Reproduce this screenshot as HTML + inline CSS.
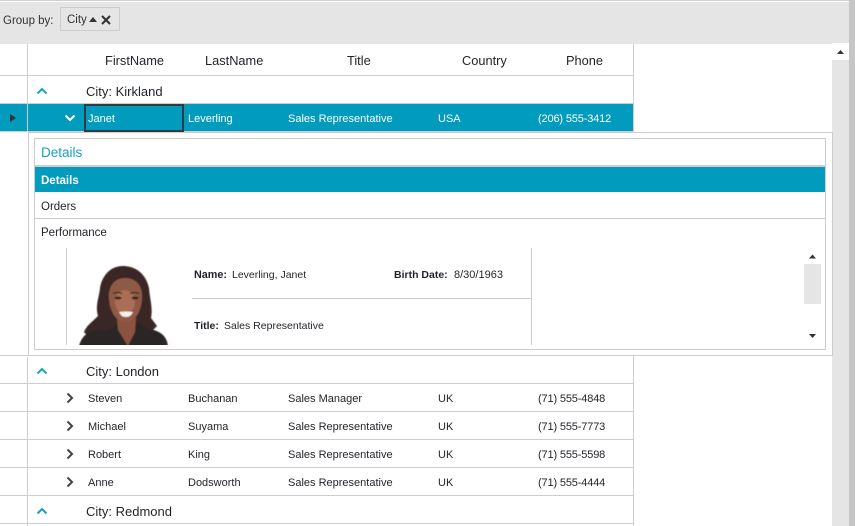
<!DOCTYPE html>
<html><head><meta charset="utf-8">
<style>
html,body{margin:0;padding:0;background:#fff}
body{width:855px;height:526px;overflow:hidden;position:relative;font-family:"Liberation Sans",sans-serif;color:#1f2328}
.a{position:absolute}
.l{position:absolute;background:#cdcdcd}
.t{position:absolute;white-space:nowrap;font-size:11px;line-height:14px}
.p{letter-spacing:-.15px}
.h{position:absolute;white-space:nowrap;font-size:12.800px;line-height:16px}
.g{position:absolute;white-space:nowrap;font-size:13px;line-height:16px}
.w{color:#fff}
svg{position:absolute;overflow:visible}
</style></head><body>
<div class="a" style="left:0;top:2px;width:855px;height:42px;background:#e5e5e5"></div>
<div class="a" style="left:0;top:0;width:855px;height:1px;background:#cfcfcf"></div>
<div class="h" style="left:3px;top:13px;font-size:11.500px;color:#333">Group by:</div>
<div class="a" style="left:60px;top:7px;width:58px;height:22px;border:1px solid #cdcdcd;background:#e5e5e5"></div>
<div class="h" style="left:67px;top:12px;font-size:11.500px;color:#333">City</div>
<svg style="left:0;top:0" width="855" height="526">
<path d="M89 22L93 17L97 22Z" fill="#333"/>
<path d="M102 16L110 24M110 16L102 24" stroke="#333" stroke-width="2" fill="none"/>
</svg>

<!-- outer scrollbar -->
<div class="a" style="left:832px;top:44px;width:17px;height:482px;background:#e5e5e5"></div>
<div class="a" style="left:849px;top:0;width:6px;height:526px;background:#c6c6c6"></div>
<div class="a" style="left:832px;top:43px;width:17px;height:17px;background:#fff"></div>
<svg style="left:0;top:0" width="855" height="526"><path d="M837 54L840.500 50L844 54Z" fill="#333"/></svg>

<!-- grid lines -->
<div class="l" style="left:27px;top:44px;width:1px;height:88px"></div>
<div class="l" style="left:27px;top:357px;width:1px;height:169px"></div>
<div class="l" style="left:633px;top:44px;width:1px;height:88px"></div>
<div class="l" style="left:633px;top:355px;width:1px;height:171px"></div>
<div class="l" style="left:0;top:75px;width:633px;height:1px"></div>
<div class="l" style="left:0;top:103px;width:633px;height:1px"></div>
<div class="l" style="left:0;top:131px;width:633px;height:1px"></div>
<div class="l" style="left:0;top:355px;width:832px;height:1px"></div>
<div class="l" style="left:0;top:383px;width:633px;height:1px"></div>
<div class="l" style="left:0;top:411px;width:633px;height:1px"></div>
<div class="l" style="left:0;top:439px;width:633px;height:1px"></div>
<div class="l" style="left:0;top:467px;width:633px;height:1px"></div>
<div class="l" style="left:0;top:495px;width:633px;height:1px"></div>
<div class="l" style="left:0;top:523px;width:633px;height:1px"></div>

<!-- header -->
<div class="h" style="left:105px;top:53px">FirstName</div>
<div class="h" style="left:205px;top:53px">LastName</div>
<div class="h" style="left:347px;top:53px">Title</div>
<div class="h" style="left:462px;top:53px">Country</div>
<div class="h" style="left:566px;top:53px">Phone</div>

<!-- Kirkland -->
<div class="g" style="left:86px;top:84px">City: Kirkland</div>

<!-- selected -->
<div class="a" style="left:0;top:104px;width:27px;height:27px;background:#009bbd"></div>
<div class="a" style="left:28px;top:104px;width:605px;height:27px;background:#009bbd"></div>
<div class="a" style="left:84px;top:104px;width:96px;height:24px;border:2px solid #2f3a42"></div>
<div class="t w" style="left:88px;top:112px">Janet</div>
<div class="t w" style="left:188px;top:112px">Leverling</div>
<div class="t w" style="left:288px;top:112px">Sales Representative</div>
<div class="t w" style="left:438px;top:112px">USA</div>
<div class="t w p" style="left:538px;top:112px">(206) 555-3412</div>

<!-- detail -->
<div class="a" style="left:28px;top:132px;width:803px;height:222px;border:1px solid #cdcdcd;background:#fff"></div>
<div class="a" style="left:34px;top:138px;width:790px;height:210px;border:1px solid #cdcdcd;background:#fff"></div>
<div class="l" style="left:35px;top:165px;width:790px;height:2px"></div>
<div class="h" style="left:41px;top:145px;font-size:13.500px;color:#1a9fc0">Details</div>
<div class="a" style="left:35px;top:167px;width:790px;height:25px;background:#009bbd"></div>
<div class="t w" style="left:41px;top:174px;font-weight:bold;font-size:11.500px">Details</div>
<div class="l" style="left:35px;top:218px;width:790px;height:1px"></div>
<div class="t" style="left:41px;top:200px;font-size:11.500px">Orders</div>
<div class="t" style="left:41px;top:226px;font-size:11.500px">Performance</div>
<div class="l" style="left:66px;top:248px;width:1px;height:97px"></div>
<div class="l" style="left:531px;top:248px;width:1px;height:97px"></div>
<div class="l" style="left:192px;top:298px;width:339px;height:1px"></div>
<div class="t" style="left:194px;top:268px;font-size:10.800px;font-weight:bold">Name:</div>
<div class="t" style="left:232px;top:268px;font-size:10.500px">Leverling, Janet</div>
<div class="t" style="left:394px;top:268px;font-size:10.500px;font-weight:bold">Birth Date:</div>
<div class="t" style="left:454px;top:268px">8/30/1963</div>
<div class="t" style="left:194px;top:319px;font-size:10.500px;font-weight:bold">Title:</div>
<div class="t" style="left:224px;top:319px;font-size:10.500px">Sales Representative</div>

<!-- inner scrollbar -->
<div class="a" style="left:804px;top:264px;width:17px;height:40px;background:#e5e5e5"></div>

<!-- London -->
<div class="g" style="left:86px;top:364px">City: London</div>
<div class="t" style="left:88px;top:392px">Steven</div><div class="t" style="left:188px;top:392px">Buchanan</div><div class="t" style="left:288px;top:392px">Sales Manager</div><div class="t" style="left:438px;top:392px">UK</div><div class="t p" style="left:538px;top:392px">(71) 555-4848</div>
<div class="t" style="left:88px;top:420px">Michael</div><div class="t" style="left:188px;top:420px">Suyama</div><div class="t" style="left:288px;top:420px">Sales Representative</div><div class="t" style="left:438px;top:420px">UK</div><div class="t p" style="left:538px;top:420px">(71) 555-7773</div>
<div class="t" style="left:88px;top:448px">Robert</div><div class="t" style="left:188px;top:448px">King</div><div class="t" style="left:288px;top:448px">Sales Representative</div><div class="t" style="left:438px;top:448px">UK</div><div class="t p" style="left:538px;top:448px">(71) 555-5598</div>
<div class="t" style="left:88px;top:476px">Anne</div><div class="t" style="left:188px;top:476px">Dodsworth</div><div class="t" style="left:288px;top:476px">Sales Representative</div><div class="t" style="left:438px;top:476px">UK</div><div class="t p" style="left:538px;top:476px">(71) 555-4444</div>
<div class="g" style="left:86px;top:504px">City: Redmond</div>

<!-- icons -->
<svg style="left:0;top:0" width="855" height="526">
<defs><filter id="b" x="-10%" y="-10%" width="120%" height="120%"><feGaussianBlur stdDeviation="0.6"/></filter>
<clipPath id="c"><rect x="70" y="255" width="105" height="90"/></clipPath></defs>
<g fill="none" stroke-width="2">
<path d="M37.500 93.500L42 89L46.500 93.500" stroke="#1a9fc0"/>
<path d="M37.500 373.500L42 369L46.500 373.500" stroke="#1a9fc0"/>
<path d="M37.500 513.500L42 509L46.500 513.500" stroke="#1a9fc0"/>
<path d="M65.500 115.500L70 120L74.500 115.500" stroke="#fff"/>
<path d="M67.500 393.500L72 398L67.500 402.500" stroke="#444"/>
<path d="M67.500 421.500L72 426L67.500 430.500" stroke="#444"/>
<path d="M67.500 449.500L72 454L67.500 458.500" stroke="#444"/>
<path d="M67.500 477.500L72 482L67.500 486.500" stroke="#444"/>
</g>
<path d="M10 114L16 118L10 122Z" fill="#333"/>
<path d="M809 258.500L812.500 254.500L816 258.500Z" fill="#333"/>
<path d="M809 334L812.500 338L816 334Z" fill="#333"/>

<!-- portrait -->
<g clip-path="url(#c)"><g filter="url(#b)">
<path d="M123 266C110 266 102 276 100 288C99 298 95 306 98 316C92 322 86 326 84 332C90 340 110 342 125 338C138 340 150 334 157 326L151 318C153 308 150 300 149 288C146 274 136 266 123 266Z" fill="#3a2825"/>
<path d="M79 346C81 338 86 332 95 330C104 332 112 330 116 324L128 346Z" fill="#2a2627"/>
<path d="M168 346C167 338 163 333 154 330C146 328 140 326 137 322L128 346Z" fill="#2a2627"/>
<path d="M117 318L136 318L135 332L128 346L118 330Z" fill="#8a5240"/>
<path d="M125 278C113 278 108 288 109 299C110 312 116 322 126 322C135 322 141 312 142 299C143 287 137 278 125 278Z" fill="#8f5a45"/>
<ellipse cx="125" cy="302" rx="10" ry="12" fill="#a96e55"/>
<path d="M113 293.500Q118 291.500 122 293.500" stroke="#2b1c18" stroke-width="1" fill="none"/>
<path d="M130 293.500Q135 291.500 139 293.500" stroke="#2b1c18" stroke-width="1" fill="none"/>
<ellipse cx="118" cy="298" rx="3.500" ry="1.400" fill="#2f2320"/>
<ellipse cx="135" cy="298" rx="3.500" ry="1.400" fill="#2f2320"/>
<path d="M119 312Q126 311 133 312Q131 317 126 317Q121 317 119 312Z" fill="#f6eee9"/>
</g></g>
</svg>
</body></html>
